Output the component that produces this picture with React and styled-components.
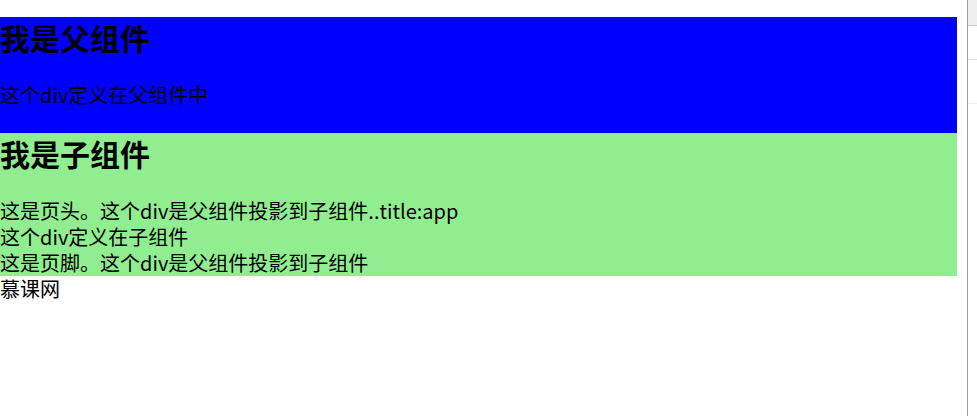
import React from "react";
import styled, { createGlobalStyle } from "styled-components";

const GlobalStyle = createGlobalStyle`
  html, body {
    margin: 0;
    padding: 0;
    background: #ffffff;
  }
  body {
    font-family: "Noto Sans CJK SC", "Noto Sans", sans-serif;
    font-size: 20px;
    line-height: 26px;
    color: #000000;
  }
`;

const Page = styled.div`
  display: flex;
  height: 416px;
  overflow: hidden;
`;

const Main = styled.div`
  flex: 1;
  padding: 17px 10px 0 0;
`;

const Panel = styled.div`
  background: ${(p) => p.$color};
  padding-bottom: ${(p) => p.$pad || 0}px;
`;

const Title = styled.h2`
  margin: 0 0 25px;
  font-size: 30px;
  line-height: 40px;
  font-weight: bold;
`;

const Line = styled.div`
  height: 26px;
  white-space: nowrap;
`;

const Side = styled.div`
  width: 9px;
  border-left: 1px solid #a0a0a0;
  display: flex;
  flex-direction: column;
`;

const SideRow = styled.div`
  height: ${(p) => p.$h}px;
  background: ${(p) => p.$bg || "#ffffff"};
  border-bottom: 1px solid ${(p) => p.$line};
`;

function Child() {
  return (
    <Panel $color="#90ee90">
      <Title>我是子组件</Title>
      <Line>这是页头。这个div是父组件投影到子组件..title:app</Line>
      <Line>这个div定义在子组件</Line>
      <Line>这是页脚。这个div是父组件投影到子组件</Line>
    </Panel>
  );
}

export default function App() {
  return (
    <>
      <GlobalStyle />
      <Page>
        <Main>
          <Panel $color="#0000ff" $pad={25}>
            <Title>我是父组件</Title>
            <Line>这个div定义在父组件中</Line>
          </Panel>
          <Child />
          <Line>慕课网</Line>
        </Main>
        <Side>
          <SideRow $h={25} $bg="#f0f0f0" $line="#cccccc" />
          <SideRow $h={33} $line="#dddddd" />
          <SideRow $h={43} $line="#eeeeee" />
        </Side>
      </Page>
    </>
  );
}
